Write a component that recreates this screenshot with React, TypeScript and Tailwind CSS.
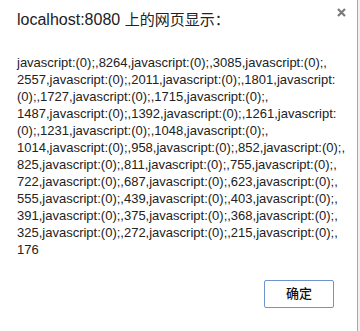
const lines = [
  "javascript:(0);,8264,javascript:(0);,3085,javascript:(0);,",
  "2557,javascript:(0);,2011,javascript:(0);,1801,javascript:",
  "(0);,1727,javascript:(0);,1715,javascript:(0);,",
  "1487,javascript:(0);,1392,javascript:(0);,1261,javascript:",
  "(0);,1231,javascript:(0);,1048,javascript:(0);,",
  "1014,javascript:(0);,958,javascript:(0);,852,javascript:(0);,",
  "825,javascript:(0);,811,javascript:(0);,755,javascript:(0);,",
  "722,javascript:(0);,687,javascript:(0);,623,javascript:(0);,",
  "555,javascript:(0);,439,javascript:(0);,403,javascript:(0);,",
  "391,javascript:(0);,375,javascript:(0);,368,javascript:(0);,",
  "325,javascript:(0);,272,javascript:(0);,215,javascript:(0);,",
  "176",
];

export default function App() {
  return (
    <div
      className="flex h-[331px] w-[360px] bg-[#f0f0f0]"
      style={{ fontFamily: '"Liberation Sans", "Noto Sans CJK SC", sans-serif' }}
    >
      <div className="relative flex w-[358px] flex-col border-r border-[#a8a8a8] bg-white">
        <button className="absolute right-[11px] top-[7px] flex h-[10px] w-[10px] items-center justify-center text-[#7a7a7a]">
          <svg width="9" height="9" viewBox="0 0 9 9">
            <path d="M1 1L8 8M8 1L1 8" stroke="currentColor" strokeWidth="2.2" />
          </svg>
        </button>

        <h1 className="pl-[17px] pt-[10px] text-[16px] leading-[19px] text-[#222]">
          localhost:8080 <span className="text-[15px]">上的网页显示：</span>
        </h1>

        <div className="mt-[25px] pl-[17px] text-[13px] leading-[17px] text-[#222]">
          {lines.map((l, i) => (
            <div key={i} className="whitespace-nowrap">
              {l}
            </div>
          ))}
        </div>

        <div className="mt-[22px] flex justify-end pr-[23px]">
          <button className="h-[28px] w-[70px] rounded-[2px] border border-[#6f93cf] bg-white text-[13px] font-medium text-[#111]">
            确定
          </button>
        </div>
      </div>
    </div>
  );
}
